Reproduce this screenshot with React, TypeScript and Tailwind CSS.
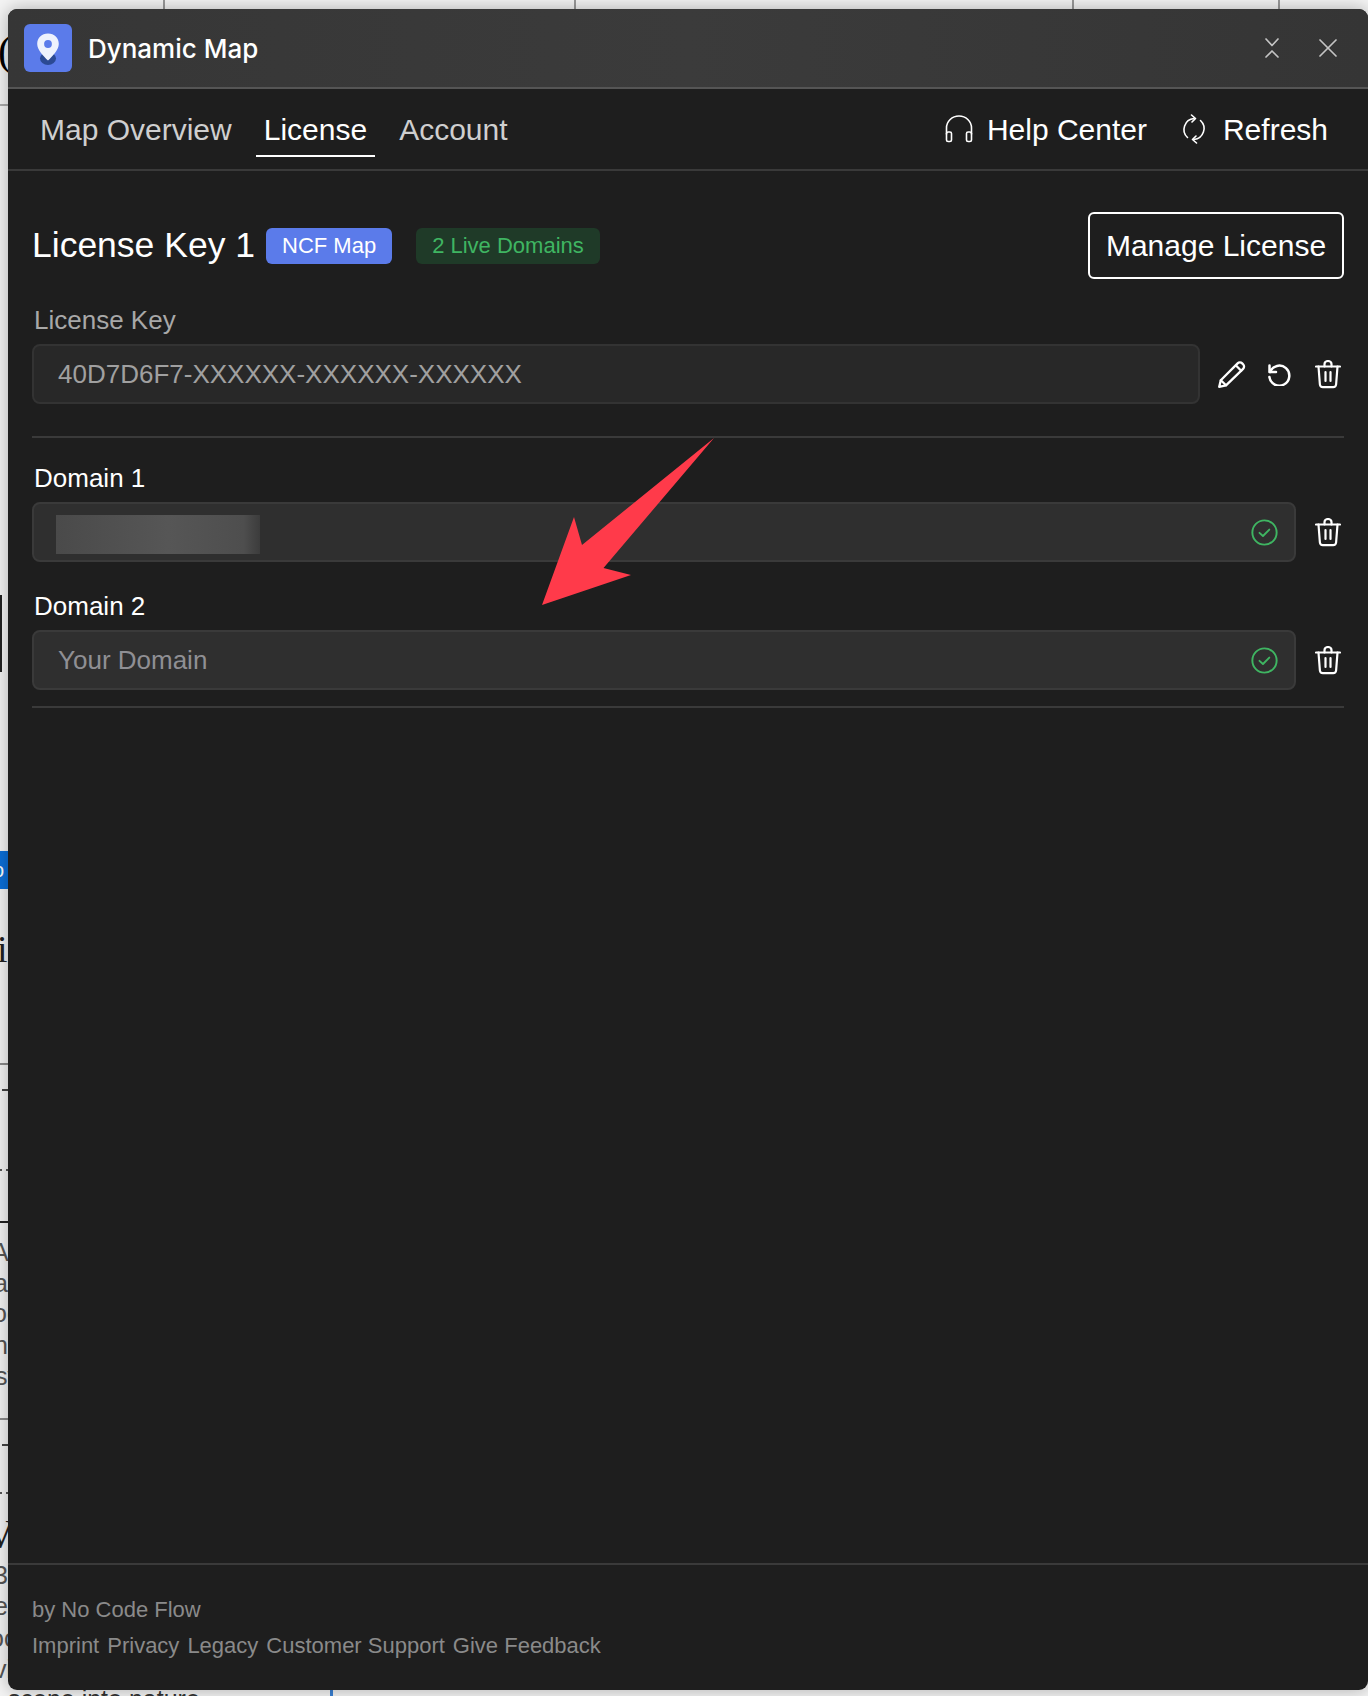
const SIDE_TEXT = [
  { text: 'A', left: -8, top: 1240 },
  { text: 'ai', left: -6, top: 1271 },
  { text: 'oc', left: -7, top: 1301 },
  { text: 'nl', left: -6, top: 1333 },
  { text: 'sv', left: -5, top: 1364 },
  { text: '3', left: -6, top: 1563 },
  { text: 'el', left: -6, top: 1594 },
  { text: 'oc', left: -10, top: 1626 },
  { text: 'vi', left: -6, top: 1657 },
];

function TrashIcon() {
  return (
    <svg viewBox="0 0 26 29" className="h-[29px] w-[26px] shrink-0" fill="none" stroke="#fff" strokeWidth="2.200" strokeLinecap="round" strokeLinejoin="round">
      <path d="M1 6.500h24" />
      <path d="M9.500 6.500V4a3.500 3 0 0 1 7 0v2.500" />
      <path d="M3.500 6.500l1.400 18a3 3 0 0 0 3 2.700h10.200a3 3 0 0 0 3-2.700l1.400-18" />
      <path d="M10.500 12v9" />
      <path d="M15.500 12v9" />
    </svg>
  );
}

function PencilIcon() {
  return (
    <svg viewBox="0 0 28 27" className="h-[27px] w-[28px]" fill="none" stroke="#fff" strokeWidth="2.300" strokeLinecap="round" strokeLinejoin="round">
      <path d="M1.200 25.800l1.600-6.600L19.600 2.400a3.200 3.200 0 0 1 4.600 0l.9.9a3.200 3.200 0 0 1 0 4.600L8 24.300z" />
      <path d="M18 4.500l5.200 5.200" />
      <path d="M2.800 19.200L8 24.300" />
    </svg>
  );
}

function UndoIcon() {
  return (
    <svg viewBox="0 0 24 24" className="h-[24px] w-[24px]" fill="none" stroke="#fff" strokeWidth="2.500" strokeLinecap="round" strokeLinejoin="round">
      <path d="M2.500 3.500v6.500h6.500" />
      <path d="M3 10a10 10 0 1 1-.6 5" />
    </svg>
  );
}

function HeadphonesIcon() {
  return (
    <svg viewBox="0 0 28 28" className="h-[28px] w-[28px]" fill="none" stroke="#fff" strokeWidth="1.600" strokeLinecap="round" strokeLinejoin="round">
      <path d="M1.500 19v-6a12.500 12 0 0 1 25 0v6" />
      <rect x="1.500" y="17" width="5" height="9.500" rx="1.600" />
      <rect x="21.500" y="17" width="5" height="9.500" rx="1.600" />
    </svg>
  );
}

function SyncIcon() {
  return (
    <svg viewBox="0 0 26 30" className="h-[30px] w-[26px]" fill="none" stroke="#fff" strokeWidth="1.600" strokeLinecap="round" strokeLinejoin="round">
      <path d="M13 4.500A11 11 0 0 0 6.500 23.500" />
      <path d="M13 25.500A11 11 0 0 0 19.500 6.500" />
      <path d="M10.500 1l4 3.500-3.500 3.500" />
      <path d="M15.500 29l-4-3.500 3.500-3.500" />
    </svg>
  );
}

function CheckIcon() {
  return (
    <svg viewBox="0 0 28 28" className="h-[27px] w-[27px] shrink-0" fill="none" stroke="#3fb562" strokeWidth="2" strokeLinecap="round" strokeLinejoin="round">
      <circle cx="14" cy="14" r="12.600" />
      <path d="M8.800 14.400l3.600 3.200 6.600-6.600" />
    </svg>
  );
}

function CollapseIcon() {
  return (
    <svg viewBox="0 0 14 20" className="h-[20px] w-[14px]" fill="none" stroke="#c4c4c4" strokeWidth="1.700" strokeLinecap="round" strokeLinejoin="round">
      <path d="M1 1l6 6.500L13 1" />
      <path d="M1 19l6-6 6 6" />
    </svg>
  );
}

function CloseIcon() {
  return (
    <svg viewBox="0 0 18 18" className="h-[18px] w-[18px]" fill="none" stroke="#c4c4c4" strokeWidth="1.700" strokeLinecap="round" strokeLinejoin="round">
      <path d="M1 1l16 16" />
      <path d="M17 1L1 17" />
    </svg>
  );
}

function LogoIcon() {
  return (
    <div className="flex h-[48px] w-[48px] shrink-0 items-center justify-center rounded-[6px] bg-[#5b7bea]">
      <svg viewBox="0 0 48 48" className="h-[48px] w-[48px]">
        <ellipse cx="24" cy="34.500" rx="8" ry="6.500" fill="#2b4a94" />
        <path d="M24 9.500c-6.400 0-10.800 4.600-10.800 10.400 0 6 6.600 12.400 10.800 16.600 4.200-4.200 10.800-10.600 10.800-16.600 0-5.800-4.400-10.400-10.800-10.400z" fill="#eef2fd" />
        <circle cx="24" cy="20" r="3.900" fill="#5b7bea" />
      </svg>
    </div>
  );
}

function DomainRow({ label, children }: { label: string; children: React.ReactNode }) {
  return (
    <div>
      <p className="mb-[8px] h-[32px] pl-[2px] text-[26px] leading-[32px] text-white">{label}</p>
      <div className="flex items-center justify-between pr-[3px]">
        <div className="flex h-[60px] w-[1264px] items-center justify-between rounded-[8px] border-2 border-[#3a3a3a] bg-[#2f2f2f] pr-[16px]">
          {children}
          <CheckIcon />
        </div>
        <TrashIcon />
      </div>
    </div>
  );
}

export default function App() {
  return (
    <div className="relative h-[1696px] w-[1368px] overflow-hidden bg-[#f4f4f4] font-['Liberation_Sans',Arial,sans-serif]">
      {/* page showing behind the modal */}
      <div className="absolute left-[163px] top-0 h-[10px] w-[2px] bg-[#999]" />
      <div className="absolute left-[574px] top-0 h-[10px] w-[2px] bg-[#999]" />
      <div className="absolute left-[1072px] top-0 h-[10px] w-[2px] bg-[#999]" />
      <div className="absolute left-[1278px] top-0 h-[10px] w-[2px] bg-[#999]" />
      <div className="absolute left-0 top-[104px] h-[2px] w-[8px] bg-[#aaa]" />
      <div className="absolute left-[-2px] top-[30px] font-['Liberation_Serif',serif] text-[42px] leading-none text-black">(</div>
      <div className="absolute left-0 top-[595px] h-[77px] w-[2px] bg-[#222]" />
      <div className="absolute left-0 top-[851px] h-[38px] w-[8px] overflow-hidden bg-[#0b6fd8] text-[20px] leading-[38px] text-white"><span className="ml-[-7px]">o</span></div>
      <div className="absolute left-[-3px] top-[930px] font-['Liberation_Serif',serif] text-[38px] leading-none text-[#222]">i</div>
      <div className="absolute left-0 top-[1063px] h-[2px] w-[8px] bg-[#8a8a8a]" />
      <div className="absolute left-[2px] top-[1089px] h-[2px] w-[6px] bg-[#444]" />
      <div className="absolute left-0 top-[1169px] h-[2px] w-[2px] bg-[#555]" />
      <div className="absolute left-[6px] top-[1169px] h-[2px] w-[2px] bg-[#555]" />
      <div className="absolute left-0 top-[1221px] h-[2px] w-[8px] bg-[#222]" />
      <div className="absolute left-0 top-[1418px] h-[2px] w-[8px] bg-[#8a8a8a]" />
      <div className="absolute left-[2px] top-[1444px] h-[2px] w-[6px] bg-[#444]" />
      <div className="absolute left-0 top-[1492px] h-[2px] w-[2px] bg-[#555]" />
      <div className="absolute left-[6px] top-[1492px] h-[2px] w-[2px] bg-[#555]" />
      <div className="absolute left-[-14px] top-[1514px] font-['Liberation_Serif',serif] text-[40px] leading-none text-[#222]">V</div>
      {SIDE_TEXT.map(t => (
        <div key={t.top} className="absolute text-[25px] leading-none text-[#555]" style={{ left: t.left, top: t.top }}>{t.text}</div>
      ))}
      <div className="absolute left-[330px] top-[1690px] h-[6px] w-[3px] bg-[#3b82d6]" />
      <div className="absolute left-[8px] top-[1687px] text-[25px] leading-none text-[#333]">scene into nature</div>

      {/* modal */}
      <div className="relative ml-[8px] flex h-[1681px] w-[1360px] translate-y-[9px] flex-col overflow-hidden rounded-[9px] bg-[#1e1e1e] shadow-[0_0_18px_rgba(0,0,0,0.3)]">
        <header className="flex h-[80px] shrink-0 items-center justify-between border-b-2 border-[#555] bg-[linear-gradient(90deg,#363636,#3b3b3b_50%,#353535)] pl-[16px] pr-[31px]">
          <div className="flex items-center gap-[16px]">
            <LogoIcon />
            <h1 className="font-['Inter',sans-serif] text-[26px] font-medium text-white">Dynamic Map</h1>
          </div>
          <div className="flex items-center gap-[40px]">
            <CollapseIcon />
            <CloseIcon />
          </div>
        </header>

        <nav className="flex h-[82px] shrink-0 items-center justify-between border-b-2 border-[#3a3a3a] pl-[24px] pr-[40px] text-[30px]">
          <div className="flex items-center gap-[16px]">
            <a className="flex h-[56px] items-center border-y-2 border-transparent px-[8px] text-[#cfcfcf]">Map Overview</a>
            <a className="flex h-[56px] items-center border-y-2 border-transparent border-b-white px-[8px] text-white">License</a>
            <a className="flex h-[56px] items-center border-y-2 border-transparent px-[8px] text-[#cfcfcf]">Account</a>
          </div>
          <div className="flex items-center text-white">
            <HeadphonesIcon />
            <span className="ml-[14px]">Help Center</span>
            <span className="ml-[34px]"><SyncIcon /></span>
            <span className="ml-[16px]">Refresh</span>
          </div>
        </nav>

        <main className="flex-1 px-[24px]">
          <div className="mt-[41px] flex h-[67px] items-center justify-between">
            <div className="flex items-center">
              <h2 className="text-[35.500px] text-white">License Key 1</h2>
              <span className="ml-[11px] flex h-[36px] items-center rounded-[6px] bg-[#5b7bea] px-[16px] text-[22px] text-white">NCF Map</span>
              <span className="ml-[24px] flex h-[36px] items-center rounded-[6px] bg-[#1f3a28] px-[16px] text-[22px] text-[#3fb562]">2 Live Domains</span>
            </div>
            <button className="h-[67px] w-[256px] rounded-[6px] border-2 border-white text-[30px] text-white">Manage License</button>
          </div>

          <p className="mt-[25px] h-[32px] pl-[2px] text-[26px] leading-[32px] text-[#a8a8a8]">License Key</p>
          <div className="mt-[8px] flex items-center pr-[3px]">
            <div className="flex h-[60px] w-[1168px] items-center rounded-[8px] border-2 border-[#333] bg-[#282828] pl-[24px] text-[26px] text-[#a0a0a0]">
              40D7D6F7-XXXXXX-XXXXXX-XXXXXX
            </div>
            <div className="ml-auto flex items-center">
              <PencilIcon />
              <span className="ml-[21px]"><UndoIcon /></span>
              <span className="ml-[24px]"><TrashIcon /></span>
            </div>
          </div>
          <div className="mt-[32px] h-[2px] bg-[#3a3a3a]" />

          <div className="mt-[24px] flex flex-col gap-[28px]">
            <DomainRow label="Domain 1">
              <div className="ml-[22px] mt-[5px] h-[39px] w-[204px] bg-[linear-gradient(90deg,#4a4a4a,#565656_55%,#4e4e4e_92%,#3c3c3c)]" />
            </DomainRow>
            <DomainRow label="Domain 2">
              <span className="pl-[24px] text-[26px] text-[#8f8f94]">Your Domain</span>
            </DomainRow>
          </div>
          <div className="mt-[16px] h-[2px] bg-[#3a3a3a]" />
        </main>

        <footer className="h-[127px] shrink-0 border-t-2 border-[#3a3a3a] px-[24px] pt-[27px] text-[22px] text-[#8a8a8a]">
          <p className="h-[36px] leading-[36px]">by No Code Flow</p>
          <div className="flex h-[34px] items-center gap-[8px]">
            <a>Imprint</a>
            <a>Privacy</a>
            <a>Legacy</a>
            <a>Customer Support</a>
            <a>Give Feedback</a>
          </div>
        </footer>
      </div>

      {/* annotation arrow */}
      <svg className="absolute left-0 top-0 h-[1696px] w-[1368px]" viewBox="0 0 1368 1696">
        <polygon points="714,438 603.500,568 631,575 542,605 574,517 582,545" fill="#ff3a4a" />
      </svg>
    </div>
  );
}
